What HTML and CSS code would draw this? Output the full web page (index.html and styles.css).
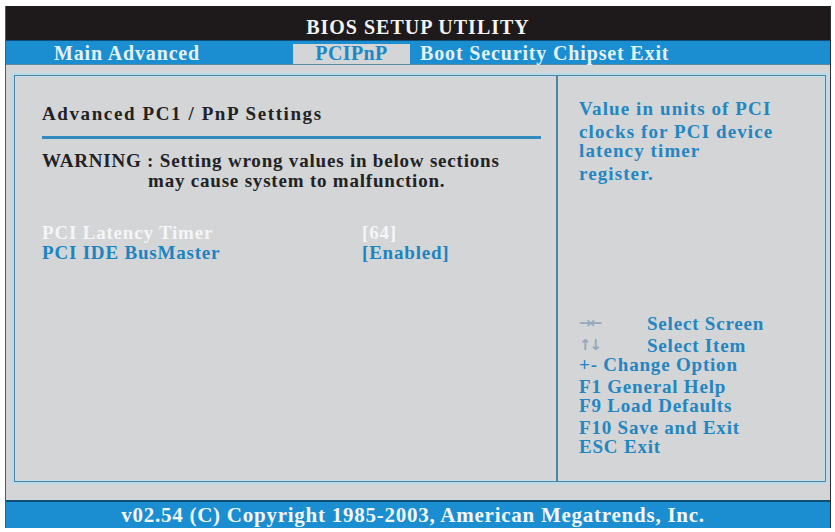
FILE: index.html
```html
<!DOCTYPE html>
<html>
<head>
<meta charset="utf-8">
<link rel="stylesheet" href="styles.css">
</head>
<body>
<div class="screen">
  <div class="title">BIOS SETUP UTILITY</div>
  <div class="tabs">
    <div class="tab tab-first">Main Advanced</div>
    <div class="tab tab-active">PCIPnP</div>
    <div class="tab tab-rest">Boot Security Chipset Exit</div>
  </div>
  <div class="main">
    <div class="box">
      <div class="left">
        <div class="heading">Advanced PC1 / PnP Settings</div>
        <div class="rule"></div>
        <div class="warning">
          <div>WARNING : Setting wrong values in below sections</div>
          <div class="warn2">may cause system to malfunction.</div>
        </div>
        <div class="settings">
          <div class="row row-sel"><span class="label">PCI Latency Timer</span><span class="value">[64]</span></div>
          <div class="row"><span class="label">PCI IDE BusMaster</span><span class="value">[Enabled]</span></div>
        </div>
      </div>
      <div class="right">
        <div class="help">
          <div class="hl">Value in units of PCI</div>
          <div class="hl hl-gap">clocks for PCI device</div>
          <div class="hl">latency timer</div>
          <div class="hl hl-gap">register.</div>
        </div>
        <div class="keys">
          <div class="key"><span class="arrow">&rarr;&larr;</span><span>Select Screen</span></div>
          <div class="key key-gap"><span class="arrow">&uarr;&darr;</span><span>Select Item</span></div>
          <div class="key">+- Change Option</div>
          <div class="key key-gap">F1 General Help</div>
          <div class="key">F9 Load Defaults</div>
          <div class="key key-gap">F10 Save and Exit</div>
          <div class="key">ESC Exit</div>
        </div>
      </div>
    </div>
  </div>
  <div class="footer">v02.54 (C) Copyright 1985-2003, American Megatrends, Inc.</div>
</div>
</body>
</html>
```

FILE: styles.css
```css
html, body {
  margin: 0;
  padding: 0;
  background: #ffffff;
}
body {
  font-family: "Liberation Serif", "Times New Roman", serif;
  font-weight: bold;
}
.screen {
  margin: 6px 0 0 6px;
  width: 824px;
  height: 522px;
  display: flex;
  flex-direction: column;
  background: #d3d5d7;
  box-shadow: -1px 0 0 #555a60, 1px 0 0 #2a2e32;
}
.title {
  height: 34px;
  background: #1e1a1c;
  color: #f4f4f4;
  font-size: 20px;
  letter-spacing: 1px;
  line-height: 20px;
  display: flex;
  align-items: flex-end;
  justify-content: center;
  padding-bottom: 3px;
  box-sizing: border-box;
}
.tabs {
  height: 25px;
  background: #1a8ed0;
  display: flex;
  align-items: stretch;
  font-size: 20px;
  line-height: 20px;
  letter-spacing: 0.85px;
  color: #e4f2f8;
  border-top: 1px solid #0e4e78;
  border-bottom: 1px solid #5a8aa4;
  box-sizing: border-box;
}
.tab {
  display: flex;
  align-items: flex-end;
  padding-bottom: 1px;
}
.tab-first {
  width: 239px;
  padding-left: 48px;
}
.tab-active {
  width: 117px;
  justify-content: center;
  background: #d3d5d7;
  color: #1c88c8;
  margin-top: 3px;
  letter-spacing: 0.4px;
}
.tab-rest {
  padding-left: 10px;
}
.main {
  flex: 1;
  padding: 10px 4px 18px 8px;
  display: flex;
}
.box {
  flex: 1;
  display: flex;
  border: 1px solid #4f84a2;
  box-shadow: 0 0 0 2px #b8dbeb, inset 0 0 0 1px #c4dde8;
  background: #d3d5d7;
}
.left {
  width: 543px;
  border-right: 2px solid #4f84a2;
  padding: 28px 0 0 27px;
  box-sizing: border-box;
  color: #222224;
  font-size: 19px;
  line-height: 20px;
  letter-spacing: 0.9px;
}
.heading {
  letter-spacing: 1.6px;
}
.rule {
  height: 3px;
  background: #2f8bbd;
  margin: 12px 15px 0 0;
}
.warning {
  margin-top: 12px;
  letter-spacing: 0.8px;
}
.warn2 {
  padding-left: 106px;
}
.settings {
  margin-top: 32px;
  color: #1c84c0;
  letter-spacing: 0.8px;
}
.row {
  display: flex;
}
.row-sel {
  color: #f4f6f8;
}
.label {
  width: 320px;
}
.right {
  flex: 1;
  display: flex;
  flex-direction: column;
  justify-content: space-between;
  padding: 23px 0 25px 21px;
  color: #2486c0;
  font-size: 19px;
}
.help {
  letter-spacing: 1.1px;
}
.hl {
  line-height: 19px;
}
.hl-gap {
  margin-top: 4px;
}
.keys {
  line-height: 19px;
  letter-spacing: 0.8px;
}
.key {
  display: flex;
}
.key-gap {
  margin-top: 3px;
}
.arrow {
  width: 68px;
  color: #94a8ba;
  font-family: "DejaVu Sans", sans-serif;
  font-size: 15px;
  font-weight: bold;
  letter-spacing: -2px;
}
.footer {
  height: 28px;
  background: #1a8ed0;
  border-top: 2px solid #0e4e78;
  color: #f4f6f8;
  font-size: 21px;
  letter-spacing: 0.75px;
  text-align: center;
  line-height: 27px;
  padding-right: 10px;
  box-sizing: border-box;
}
```
